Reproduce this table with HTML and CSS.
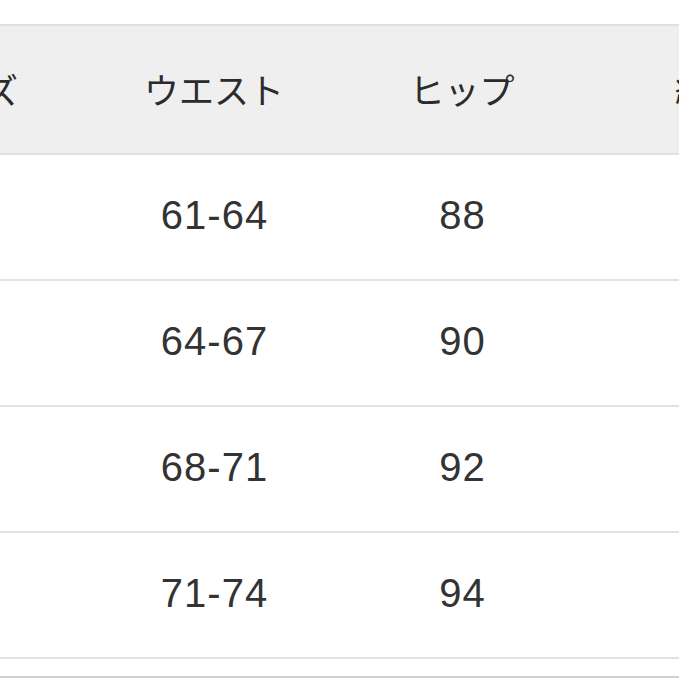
FILE: index.html
```html
<!DOCTYPE html>
<html lang="ja">
<head>
<meta charset="utf-8">
<link rel="stylesheet" href="styles.css">
</head>
<body>
<div class="page">
  <div class="table">
    <div class="row head">
      <div class="cell">サイズ</div>
      <div class="cell">ウエスト</div>
      <div class="cell">ヒップ</div>
      <div class="cell">総丈</div>
    </div>
    <div class="row">
      <div class="cell"></div>
      <div class="cell num">61-64</div>
      <div class="cell num">88</div>
      <div class="cell num"></div>
    </div>
    <div class="row">
      <div class="cell"></div>
      <div class="cell num">64-67</div>
      <div class="cell num">90</div>
      <div class="cell num"></div>
    </div>
    <div class="row">
      <div class="cell"></div>
      <div class="cell num">68-71</div>
      <div class="cell num">92</div>
      <div class="cell num"></div>
    </div>
    <div class="row">
      <div class="cell"></div>
      <div class="cell num">71-74</div>
      <div class="cell num">94</div>
      <div class="cell num"></div>
    </div>
    <div class="row tail"></div>
  </div>
</div>
</body>
</html>
```

FILE: styles.css
```css
html, body {
  margin: 0;
  padding: 0;
  background: #ffffff;
  overflow: hidden;
}
.page {
  width: 679px;
  height: 679px;
  overflow: hidden;
  padding-top: 24px;
  box-sizing: border-box;
}
.table {
  margin-left: -158px;
  width: 992px;
  border-top: 2px solid #e0e0e0;
  color: #333333;
}
.row {
  display: grid;
  grid-template-columns: repeat(4, 248px);
  height: 124px;
  border-bottom: 2px solid #e2e2e2;
}
.row.head {
  height: 127px;
  background: #efefef;
}
.cell {
  display: flex;
  align-items: center;
  justify-content: center;
  font-family: "Noto Sans CJK JP", "Liberation Sans", sans-serif;
  font-size: 35px;
  font-weight: 400;
  color: #2b2b2b;
}
.head .cell {
  padding-bottom: 2px;
}
.cell.num {
  font-family: "Liberation Sans", Arial, sans-serif;
  font-size: 40px;
  letter-spacing: 1px;
  text-indent: 1px;
  color: #333333;
  padding-bottom: 3px;
}
.row.tail {
  height: 17px;
  border-bottom: 2px solid #cfcfcf;
}
```
